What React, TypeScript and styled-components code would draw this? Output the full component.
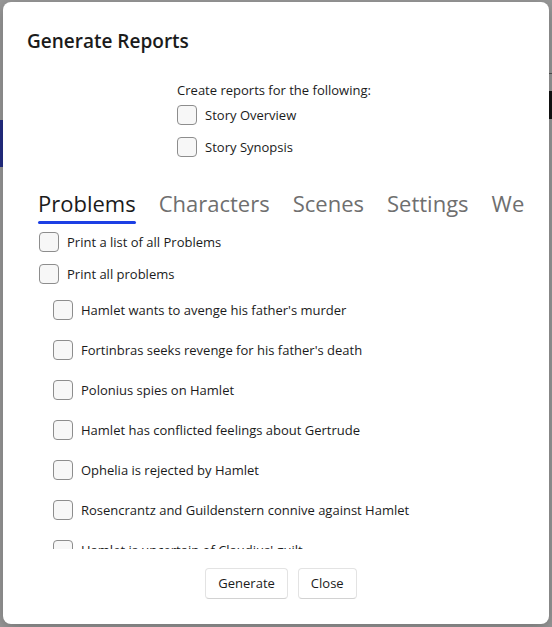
import styled, {createGlobalStyle} from 'styled-components';

const GlobalStyle = createGlobalStyle`
  html, body {
    margin: 0;
    padding: 0;
  }
  body {
    font-family: "Segoe UI", "Open Sans", "Noto Sans", sans-serif;
    color: #1b1b1b;
    background: #ffffff;
  }`

const Page = styled.div`
  width: 552px;
  height: 627px;
  position: relative;
  overflow: hidden;
  display: flex;
  background: #ffffff;`

const Sidebar = styled.div`
  width: 120px;
  padding-top: 120px;`

const SideItem = styled.div`
  height: 47px;
  background: ${(p: {active?: boolean}) => p.active ? "#3d4ee0" : "transparent"};`

const Main = styled.div`
  flex: 1;
  display: flex;
  flex-direction: column;`

const MainHeader = styled.div`
  height: 73px;
  border-bottom: 1px solid #888;`

const MainSideBar = styled.div`
  align-self: flex-end;
  width: 4px;
  height: 28px;
  margin-top: 17px;
  background: #222;`

const Overlay = styled.div`
  position: absolute;
  inset: 0;
  background: rgba(0, 0, 0, 0.4);
  display: flex;
  align-items: flex-start;
  justify-content: center;
  padding-top: 2px;`

const Dialog = styled.div`
  width: 546px;
  height: 622px;
  box-sizing: border-box;
  background: #ffffff;
  border-radius: 8px;
  box-shadow: 0 4px 16px rgba(0, 0, 0, 0.25);
  padding: 24px 24px 25px 24px;
  display: flex;
  flex-direction: column;`

const Title = styled.h2`
  margin: 0;
  font-size: 19px;
  font-weight: 600;
  line-height: 30px;
  color: #1b1b1b;`

const Options = styled.div`
  align-self: center;
  margin-top: 25px;
  margin-right: 4px;
  display: flex;
  flex-direction: column;`

const Caption = styled.div`
  font-size: 13px;
  line-height: 18px;`

const CheckRow = styled.label`
  display: flex;
  align-items: center;
  gap: 8px;
  height: ${(p: {tall?: boolean}) => p.tall ? "40px" : "32px"};
  padding-left: ${(p: {indent?: number}) => (p.indent || 0) + "px"};
  font-size: 13px;
  color: #1b1b1b;
  white-space: nowrap;`

const Box = styled.input.attrs({type: "checkbox"})`
  appearance: none;
  margin: 0;
  flex: none;
  width: 20px;
  height: 20px;
  box-sizing: border-box;
  border: 1px solid #8d8d8d;
  border-radius: 4px;
  background: #f7f7f7;`

const TabBar = styled.div`
  margin-top: 25px;
  display: flex;
  overflow: hidden;
  white-space: nowrap;`

const Tab = styled.div`
  flex: none;
  padding: 0 12px 0 11px;
  display: flex;
  flex-direction: column;
  align-items: stretch;
  font-size: 22px;
  line-height: 31px;
  color: ${(p: {active?: boolean}) => p.active ? "#1b1b1b" : "#6f6f6f"};
  &:after {
    content: "";
    display: block;
    height: 3px;
    margin-top: 2px;
    border-radius: 2px;
    background: ${(p: {active?: boolean}) => p.active ? "#1c3fe4" : "transparent"};
  }`

const Panel = styled.div`
  height: 325px;
  overflow: hidden;
  padding: 2px 0 0 12px;
  box-sizing: border-box;`

const Footer = styled.div`
  margin-top: 19px;
  display: flex;
  justify-content: center;
  gap: 10px;
  padding-left: 10px;`

const Button = styled.button`
  height: 31px;
  padding: 0 12px;
  font-family: inherit;
  font-size: 13px;
  line-height: 29px;
  color: #1b1b1b;
  background: #ffffff;
  border: 1px solid #e3e3e3;
  border-bottom-color: #d2d2d2;
  border-radius: 4px;`

const tabs = ["Problems", "Characters", "Scenes", "Settings", "Weather"];

const problems = [
  "Hamlet wants to avenge his father's murder",
  "Fortinbras seeks revenge for his father's death",
  "Polonius spies on Hamlet",
  "Hamlet has conflicted feelings about Gertrude",
  "Ophelia is rejected by Hamlet",
  "Rosencrantz and Guildenstern connive against Hamlet",
  "Hamlet is uncertain of Claudius' guilt",
  "Laertes seeks revenge for Polonius' death",
];

const App = () => {
  return (
    <Page>
      <GlobalStyle/>
      <Sidebar>
        <SideItem active/>
      </Sidebar>
      <Main>
        <MainHeader/>
        <MainSideBar/>
      </Main>
      <Overlay>
        <Dialog>
          <Title>Generate Reports</Title>
          <Options>
            <Caption>Create reports for the following:</Caption>
            <CheckRow><Box/>Story Overview</CheckRow>
            <CheckRow><Box/>Story Synopsis</CheckRow>
          </Options>
          <TabBar>
            {tabs.map((t, i) => <Tab key={t} active={i === 0}>{t}</Tab>)}
          </TabBar>
          <Panel>
            <CheckRow><Box/>Print a list of all Problems</CheckRow>
            <CheckRow><Box/>Print all problems</CheckRow>
            {problems.map(p => (
              <CheckRow key={p} tall indent={14}><Box/>{p}</CheckRow>
            ))}
          </Panel>
          <Footer>
            <Button>Generate</Button>
            <Button>Close</Button>
          </Footer>
        </Dialog>
      </Overlay>
    </Page>
  );
}

export default App
